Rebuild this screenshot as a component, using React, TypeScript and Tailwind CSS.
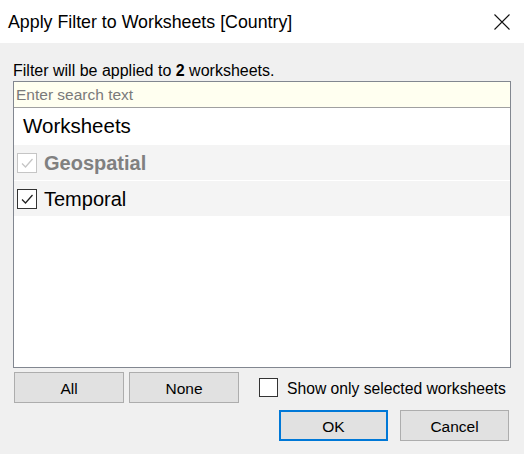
import React from 'react'

// Small check glyph used in the worksheet list
function CheckBox({ checked, disabled }: { checked?: boolean; disabled?: boolean }) {
  const border = disabled ? 'border-[#c5c5c5]' : 'border-[#333333]'
  const stroke = disabled ? '#c5c5c5' : '#222222'
  return (
    <div className={`flex h-[20px] w-[20px] shrink-0 items-center justify-center border bg-white ${border}`}>
      {checked && (
        <svg width="14" height="14" viewBox="0 0 14 14">
          <path d="M2 7.5 L5.5 11 L12.5 3" fill="none" stroke={stroke} strokeWidth="1.3" />
        </svg>
      )}
    </div>
  )
}

const worksheets = [
  { name: 'Geospatial', checked: true, disabled: true },
  { name: 'Temporal', checked: true, disabled: false },
]

function DialogButton({ label, width, primary }: { label: string; width: string; primary?: boolean }) {
  return (
    <button
      type="button"
      className={`flex h-[31px] items-center justify-center bg-[#e1e1e1] pt-[3px] text-[15.5px] text-black ${width} ${
        primary ? 'border-2 border-[#0078d7]' : 'border border-[#adadad]'
      }`}
    >
      {label}
    </button>
  )
}

export default function App() {
  return (
    <div
      className="flex h-[454px] w-[524px] flex-col overflow-hidden bg-[#f0f0f0] text-black"
      style={{ fontFamily: '"Liberation Sans", Arial, sans-serif' }}
    >
      {/* Title bar */}
      <div className="flex h-[43px] shrink-0 items-center justify-between bg-white pl-[8px] pr-[14px]">
        <span className="pt-[2px] text-[17.8px] leading-none">Apply Filter to Worksheets [Country]</span>
        <svg width="16" height="16" viewBox="0 0 16 16">
          <path d="M0.5 0.5 L15.5 15.5 M15.5 0.5 L0.5 15.5" stroke="#111111" strokeWidth="1.1" />
        </svg>
      </div>

      <div className="flex flex-1 flex-col pl-[13px] pr-[13px]">
        <div className="mt-[18px] text-[16px] leading-[19px]">
          Filter will be applied to <span className="font-bold">2</span> worksheets.
        </div>

        {/* Worksheet list */}
        <div className="mt-[1px] flex h-[287px] flex-col border border-[#828790] bg-white">
          <div className="flex h-[26px] shrink-0 items-center border-b border-[#a0a0a0] bg-[#fffff0] pl-[2px] text-[15.5px] text-[#7a7a7a]">
            Enter search text
          </div>
          <div className="flex h-[37px] shrink-0 items-center pl-[9px] text-[20.5px]">Worksheets</div>
          {worksheets.map((w) => (
            <div
              key={w.name}
              className="flex h-[36px] shrink-0 items-center gap-[7px] border-b border-white bg-[#f4f4f4] pl-[3px]"
            >
              <CheckBox checked={w.checked} disabled={w.disabled} />
              <span className={`text-[20px] ${w.disabled ? 'font-bold text-[#808080]' : 'text-black'}`}>{w.name}</span>
            </div>
          ))}
        </div>

        {/* Selection controls */}
        <div className="mt-[4px] flex items-center">
          <div className="ml-[1px] flex gap-[5px]">
            <DialogButton label="All" width="w-[110px]" />
            <DialogButton label="None" width="w-[110px]" />
          </div>
          <div className="ml-[20px] flex items-center gap-[9px]">
            <div className="h-[19px] w-[19px] border border-[#333333] bg-white" />
            <span className="pt-[3px] text-[15.7px]">Show only selected worksheets</span>
          </div>
        </div>

        <div className="mt-[7px] flex justify-end gap-[12px] pr-[2px]">
          <DialogButton label="OK" width="w-[109px]" primary />
          <DialogButton label="Cancel" width="w-[109px]" />
        </div>
      </div>
    </div>
  )
}
